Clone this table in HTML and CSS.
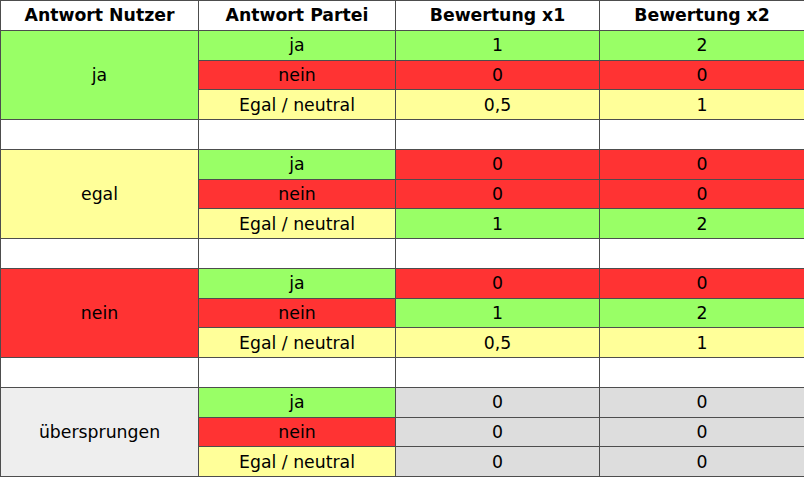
FILE: index.html
```html
<!DOCTYPE html>
<html lang="de">
<head>
<meta charset="utf-8">
<title>Bewertung</title>
<link rel="stylesheet" href="styles.css">
</head>
<body>
<table class="scores">
  <colgroup>
    <col class="c1"><col class="c2"><col class="c3"><col class="c4">
  </colgroup>
  <thead>
    <tr><th>Antwort Nutzer</th><th>Antwort Partei</th><th>Bewertung x1</th><th>Bewertung x2</th></tr>
  </thead>
  <tbody>
    <tr><td rowspan="3" class="green">ja</td><td class="green">ja</td><td class="green">1</td><td class="green">2</td></tr>
    <tr><td class="red">nein</td><td class="red">0</td><td class="red">0</td></tr>
    <tr><td class="yellow">Egal / neutral</td><td class="yellow">0,5</td><td class="yellow">1</td></tr>
    <tr class="gap"><td></td><td></td><td></td><td></td></tr>

    <tr><td rowspan="3" class="yellow">egal</td><td class="green">ja</td><td class="red">0</td><td class="red">0</td></tr>
    <tr><td class="red">nein</td><td class="red">0</td><td class="red">0</td></tr>
    <tr><td class="yellow">Egal / neutral</td><td class="green">1</td><td class="green">2</td></tr>
    <tr class="gap"><td></td><td></td><td></td><td></td></tr>

    <tr><td rowspan="3" class="red">nein</td><td class="green">ja</td><td class="red">0</td><td class="red">0</td></tr>
    <tr><td class="red">nein</td><td class="green">1</td><td class="green">2</td></tr>
    <tr><td class="yellow">Egal / neutral</td><td class="yellow">0,5</td><td class="yellow">1</td></tr>
    <tr class="gap"><td></td><td></td><td></td><td></td></tr>

    <tr><td rowspan="3" class="light">übersprungen</td><td class="green">ja</td><td class="gray">0</td><td class="gray">0</td></tr>
    <tr><td class="red">nein</td><td class="gray">0</td><td class="gray">0</td></tr>
    <tr><td class="yellow">Egal / neutral</td><td class="gray">0</td><td class="gray">0</td></tr>
  </tbody>
</table>
</body>
</html>
```
FILE: styles.css
```css
html, body {
  margin: 0;
  padding: 0;
  background: #ffffff;
}

.scores {
  border-collapse: collapse;
  table-layout: fixed;
  width: 804px;
  height: 476px;
  font-family: "DejaVu Sans", Verdana, sans-serif;
  font-size: 17.3px;
  color: #000;
}

.c1 { width: 198px; }
.c2 { width: 197px; }
.c3 { width: 204px; }
.c4 { width: 205px; }

.scores th,
.scores td {
  border: 1px solid #4d4d4d;
  padding: 0;
  text-align: center;
  vertical-align: middle;
  line-height: 20px;
  height: 28.75px;
}

.scores th {
  font-weight: bold;
  background: #ffffff;
}

.green { background: #99ff66; }
.red { background: #ff3333; }
.yellow { background: #ffff99; }
.gray { background: #dddddd; }
.light { background: #eeeeee; }
.gap td { background: #ffffff; }
```
